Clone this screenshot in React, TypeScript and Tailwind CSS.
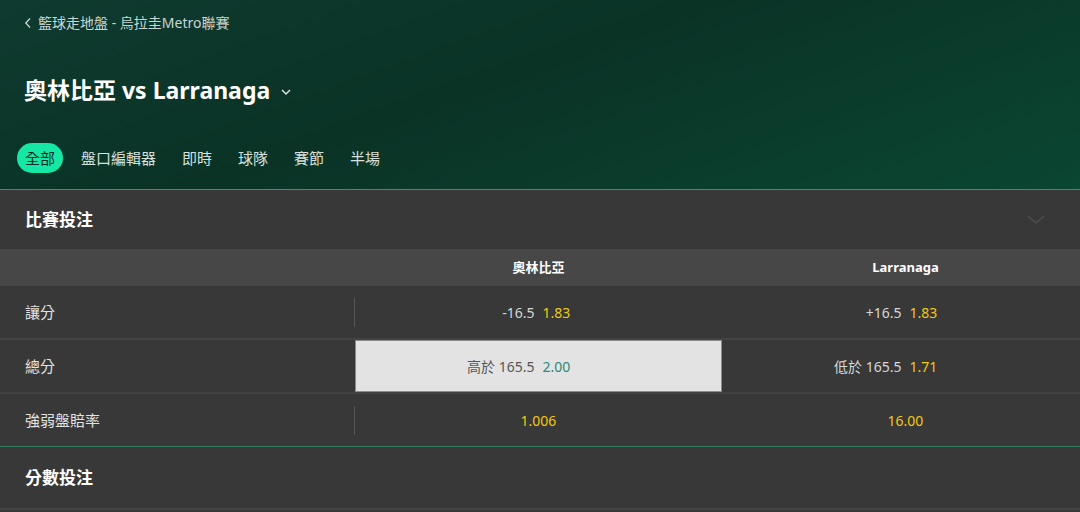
import React from "react";

const font = { fontFamily: '"Noto Sans", "Noto Sans CJK TC", sans-serif' };

const tabs = ["全部", "盤口編輯器", "即時", "球隊", "賽節", "半場"];

type Cell = { line?: string; odds: string; active?: boolean };
type Row = { label: string; cells: [Cell, Cell] };

const rows: Row[] = [
  { label: "讓分", cells: [{ line: "-16.5", odds: "1.83" }, { line: "+16.5", odds: "1.83" }] },
  {
    label: "總分",
    cells: [
      { line: "高於 165.5", odds: "2.00", active: true },
      { line: "低於 165.5", odds: "1.71" },
    ],
  },
  { label: "強弱盤賠率", cells: [{ odds: "1.006" }, { odds: "16.00" }] },
];

function OddsCell({ cell }: { cell: Cell }) {
  const box = cell.active
    ? "border border-[#8a8a8a] bg-[#e3e3e3]"
    : "";
  if (!cell.line) {
    return (
      <div className={`flex h-full items-center justify-center text-[14px] ${box}`}>
        <span className="text-[#f2c811]">{cell.odds}</span>
      </div>
    );
  }
  return (
    <div className={`grid h-full grid-cols-2 items-center text-[14px] ${box}`}>
      <span className={`pr-[4px] text-right ${cell.active ? "text-[#555]" : "text-[#d6d6d6]"}`}>
        {cell.line}
      </span>
      <span className={`pl-[4px] ${cell.active ? "text-[#2b8a78]" : "text-[#f2c811]"}`}>
        {cell.odds}
      </span>
    </div>
  );
}

export default function App() {
  return (
    <div className="h-[512px] w-[1080px] overflow-hidden bg-[#383838]" style={font}>
      <div className="h-[189px] bg-[linear-gradient(160deg,#0f3a2f_0%,#0a3326_45%,#0a4632_100%)] px-[24px]">
        <div className="flex items-center gap-[6px] pt-[12px] text-[14px] text-[#c9d6d0]">
          <svg width="8" height="12" viewBox="0 0 8 12" fill="none">
            <path d="M6 1.5 L1.8 6 L6 10.5" stroke="#c9d6d0" strokeWidth="1.3" />
          </svg>
          <span>籃球走地盤 - 烏拉圭Metro聯賽</span>
        </div>
        <div className="mt-[40px] flex items-center gap-[10px]">
          <h1 className="text-[23px] font-bold text-white">奧林比亞 vs Larranaga</h1>
          <svg width="12" height="8" viewBox="0 0 12 8" fill="none" className="mt-[3px]">
            <path d="M2 2 L6 6 L10 2" stroke="#d8e2de" strokeWidth="1.5" />
          </svg>
        </div>
        <div className="-ml-[7px] mt-[35px] flex items-center gap-[26px] text-[15px]">
          {tabs.map((t, i) => (
            <div
              key={t}
              className={
                i === 0
                  ? "-mr-[8px] rounded-full bg-[#14e8a4] px-[8px] py-[4px] text-[#0b2a22]"
                  : "py-[4px] text-[#d8e0dd]"
              }
            >
              {t}
            </div>
          ))}
        </div>
      </div>
      <div className="h-px bg-[#2c9a6c]" />

      <div className="flex h-[59px] items-center justify-between px-[25px]">
        <span className="text-[17px] font-bold text-white">比賽投注</span>
        <svg width="18" height="10" viewBox="0 0 18 10" fill="none" className="mr-[10px]">
          <path d="M1 1 L9 8 L17 1" stroke="#4d4d4d" strokeWidth="1.5" />
        </svg>
      </div>

      <div className="grid h-[37px] grid-cols-[355px_367px_367px] items-center bg-[#474747] text-[13px] font-bold text-white">
        <div />
        <div className="text-center">奧林比亞</div>
        <div className="text-center">Larranaga</div>
      </div>

      {rows.map((r, i) => (
        <div key={r.label}>
          {i > 0 && <div className="h-[2px] bg-[#424242]" />}
          <div className="grid h-[52px] grid-cols-[355px_367px_367px] items-center">
            <div className="flex h-full items-center justify-between">
              <span className="pl-[25px] text-[15px] text-[#e2e2e2]">{r.label}</span>
              {!r.cells[0].active && <div className="h-[29px] w-px bg-[#555]" />}
            </div>
            <OddsCell cell={r.cells[0]} />
            <OddsCell cell={r.cells[1]} />
          </div>
        </div>
      ))}
      <div className="h-px bg-[#2c7a5a]" />

      <div className="flex h-[61px] items-center px-[25px]">
        <span className="text-[17px] font-bold text-white">分數投注</span>
      </div>
      <div className="h-[2px] bg-[#454545]" />
    </div>
  );
}
